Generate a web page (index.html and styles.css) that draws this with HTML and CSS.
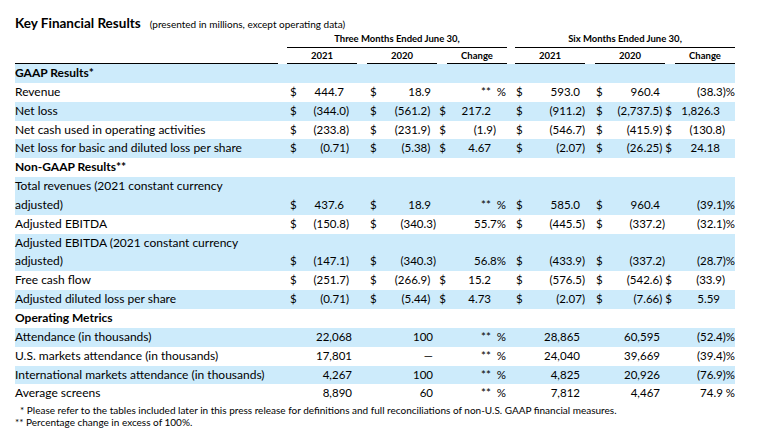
FILE: index.html
```html
<!DOCTYPE html>
<html>
<head>
<meta charset="utf-8">
<link rel="stylesheet" href="styles.css">
</head>
<body>
<div class="page">
  <div class="title"><span class="t-main">Key Financial Results</span><span class="t-sub">(presented in millions, except operating data)</span></div>
  <div class="hdr">
    <div class="grp g3">Three Months Ended June 30,</div>
    <div class="grp g6">Six Months Ended June 30,</div>
    <div class="yr y0"></div>
    <div class="yr y1">2021</div>
    <div class="yr y2">2020</div>
    <div class="yr y3">Change</div>
    <div class="yr y4">2021</div>
    <div class="yr y5">2020</div>
    <div class="yr y6">Change</div>
  </div>
  <div class="tbl">
    <div class="row band"><div class="lab sec">GAAP Results*</div></div>

    <div class="row">
      <div class="lab">Revenue</div>
      <div class="v c1"><span class="d">$</span><span class="n p">444.7</span></div>
      <div class="v c2"><span class="d">$</span><span class="n p">18.9</span></div>
      <div class="v c3 pct"><span class="n">**&nbsp;&nbsp;%</span></div>
      <div class="v c4"><span class="d">$</span><span class="n p">593.0</span></div>
      <div class="v c5"><span class="d">$</span><span class="n p">960.4</span></div>
      <div class="v c6 pct"><span class="n">(38.3)%</span></div>
    </div>

    <div class="row band">
      <div class="lab">Net loss</div>
      <div class="v c1"><span class="d">$</span><span class="n">(344.0)</span></div>
      <div class="v c2 tr"><span class="d">$</span><span class="n">(561.2)</span><span class="t">$</span></div>
      <div class="v c3 amt"><span class="n p">217.2</span></div>
      <div class="v c4"><span class="d">$</span><span class="n">(911.2)</span></div>
      <div class="v c5 tr"><span class="d">$</span><span class="n">(2,737.5)</span><span class="t">$</span></div>
      <div class="v c6 amt"><span class="n p">1,826.3</span></div>
    </div>

    <div class="row">
      <div class="lab">Net cash used in operating activities</div>
      <div class="v c1"><span class="d">$</span><span class="n">(233.8)</span></div>
      <div class="v c2 tr"><span class="d">$</span><span class="n">(231.9)</span><span class="t">$</span></div>
      <div class="v c3 amt"><span class="n">(1.9)</span></div>
      <div class="v c4"><span class="d">$</span><span class="n">(546.7)</span></div>
      <div class="v c5 tr"><span class="d">$</span><span class="n">(415.9)</span><span class="t">$</span></div>
      <div class="v c6 amt"><span class="n">(130.8)</span></div>
    </div>

    <div class="row band">
      <div class="lab">Net loss for basic and diluted loss per share</div>
      <div class="v c1"><span class="d">$</span><span class="n">(0.71)</span></div>
      <div class="v c2 tr"><span class="d">$</span><span class="n">(5.38)</span><span class="t">$</span></div>
      <div class="v c3 amt"><span class="n p">4.67</span></div>
      <div class="v c4"><span class="d">$</span><span class="n">(2.07)</span></div>
      <div class="v c5 tr"><span class="d">$</span><span class="n">(26.25)</span><span class="t">$</span></div>
      <div class="v c6 amt"><span class="n p">24.18</span></div>
    </div>

    <div class="row"><div class="lab sec">Non-GAAP Results**</div></div>

    <div class="row band">
      <div class="lab">Total revenues (2021 constant currency<br>adjusted)</div>
      <div class="v c1"><span class="d">$</span><span class="n p">437.6</span></div>
      <div class="v c2"><span class="d">$</span><span class="n p">18.9</span></div>
      <div class="v c3 pct"><span class="n">**&nbsp;&nbsp;%</span></div>
      <div class="v c4"><span class="d">$</span><span class="n p">585.0</span></div>
      <div class="v c5"><span class="d">$</span><span class="n p">960.4</span></div>
      <div class="v c6 pct"><span class="n">(39.1)%</span></div>
    </div>

    <div class="row">
      <div class="lab">Adjusted EBITDA</div>
      <div class="v c1"><span class="d">$</span><span class="n">(150.8)</span></div>
      <div class="v c2"><span class="d">$</span><span class="n">(340.3)</span></div>
      <div class="v c3 pct"><span class="n">55.7%</span></div>
      <div class="v c4"><span class="d">$</span><span class="n">(445.5)</span></div>
      <div class="v c5"><span class="d">$</span><span class="n">(337.2)</span></div>
      <div class="v c6 pct"><span class="n">(32.1)%</span></div>
    </div>

    <div class="row band">
      <div class="lab">Adjusted EBITDA (2021 constant currency<br>adjusted)</div>
      <div class="v c1"><span class="d">$</span><span class="n">(147.1)</span></div>
      <div class="v c2"><span class="d">$</span><span class="n">(340.3)</span></div>
      <div class="v c3 pct"><span class="n">56.8%</span></div>
      <div class="v c4"><span class="d">$</span><span class="n">(433.9)</span></div>
      <div class="v c5"><span class="d">$</span><span class="n">(337.2)</span></div>
      <div class="v c6 pct"><span class="n">(28.7)%</span></div>
    </div>

    <div class="row">
      <div class="lab">Free cash flow</div>
      <div class="v c1"><span class="d">$</span><span class="n">(251.7)</span></div>
      <div class="v c2 tr"><span class="d">$</span><span class="n">(266.9)</span><span class="t">$</span></div>
      <div class="v c3 amt"><span class="n p">15.2</span></div>
      <div class="v c4"><span class="d">$</span><span class="n">(576.5)</span></div>
      <div class="v c5 tr"><span class="d">$</span><span class="n">(542.6)</span><span class="t">$</span></div>
      <div class="v c6 amt"><span class="n">(33.9)</span></div>
    </div>

    <div class="row band">
      <div class="lab">Adjusted diluted loss per share</div>
      <div class="v c1"><span class="d">$</span><span class="n">(0.71)</span></div>
      <div class="v c2 tr"><span class="d">$</span><span class="n">(5.44)</span><span class="t">$</span></div>
      <div class="v c3 amt"><span class="n p">4.73</span></div>
      <div class="v c4"><span class="d">$</span><span class="n">(2.07)</span></div>
      <div class="v c5 tr"><span class="d">$</span><span class="n">(7.66)</span><span class="t">$</span></div>
      <div class="v c6 amt"><span class="n p">5.59</span></div>
    </div>

    <div class="row"><div class="lab sec">Operating Metrics</div></div>

    <div class="row band op">
      <div class="lab">Attendance (in thousands)</div>
      <div class="v c1"><span class="n">22,068</span></div>
      <div class="v c2"><span class="n">100</span></div>
      <div class="v c3 pct"><span class="n">**&nbsp;&nbsp;%</span></div>
      <div class="v c4"><span class="n">28,865</span></div>
      <div class="v c5"><span class="n">60,595</span></div>
      <div class="v c6 pct"><span class="n">(52.4)%</span></div>
    </div>

    <div class="row op">
      <div class="lab">U.S. markets attendance (in thousands)</div>
      <div class="v c1"><span class="n">17,801</span></div>
      <div class="v c2"><span class="n">—</span></div>
      <div class="v c3 pct"><span class="n">**&nbsp;&nbsp;%</span></div>
      <div class="v c4"><span class="n">24,040</span></div>
      <div class="v c5"><span class="n">39,669</span></div>
      <div class="v c6 pct"><span class="n">(39.4)%</span></div>
    </div>

    <div class="row band op">
      <div class="lab">International markets attendance (in thousands)</div>
      <div class="v c1"><span class="n">4,267</span></div>
      <div class="v c2"><span class="n">100</span></div>
      <div class="v c3 pct"><span class="n">**&nbsp;&nbsp;%</span></div>
      <div class="v c4"><span class="n">4,825</span></div>
      <div class="v c5"><span class="n">20,926</span></div>
      <div class="v c6 pct"><span class="n">(76.9)%</span></div>
    </div>

    <div class="row op">
      <div class="lab">Average screens</div>
      <div class="v c1"><span class="n">8,890</span></div>
      <div class="v c2"><span class="n">60</span></div>
      <div class="v c3 pct"><span class="n">**&nbsp;&nbsp;%</span></div>
      <div class="v c4"><span class="n">7,812</span></div>
      <div class="v c5"><span class="n">4,467</span></div>
      <div class="v c6 pct"><span class="n">74.9 %</span></div>
    </div>
  </div>
  <div class="notes">
    <p class="n1">* Please refer to the tables included later in this press release for definitions and full reconciliations of non-U.S. GAAP financial measures.</p>
    <p class="n2">** Percentage change in excess of 100%.</p>
  </div>
</div>
</body>
</html>
```

FILE: styles.css
```css
* { box-sizing: border-box; margin: 0; padding: 0; }
body { margin: 0; background: #fff; color: #000; font-family: Lato, "Open Sans", sans-serif; }
.page { padding: 12px 0 0 15px; width: 766px; }

.title { height: 19px; line-height: 19px; white-space: nowrap; }
.t-main { font-size: 13.5px; font-weight: 700; }
.t-sub { font-size: 10px; margin-left: 9px; }

.hdr {
  display: grid;
  grid-template-columns: 263px 9px 70px 10px 70px 10px 60px 8px 70px 10px 70px 10px 60px;
  grid-template-rows: 17px 16px;
  font-weight: 700;
  font-size: 9.5px;
}
.grp { border-bottom: 1px solid #000; text-align: center; line-height: 16px; grid-row: 1; }
.g3 { grid-column: 3 / 8; }
.g6 { grid-column: 9 / 14; }
.yr { grid-row: 2; border-bottom: 1px solid #000; text-align: center; line-height: 15px; }
.y0 { grid-column: 1; }
.y1 { grid-column: 3; }
.y2 { grid-column: 5; }
.y3 { grid-column: 7; }
.y4 { grid-column: 9; }
.y5 { grid-column: 11; }
.y6 { grid-column: 13; }

.tbl { width: 720px; font-size: 11.5px; }
.row {
  display: grid;
  grid-template-columns: 272px 80px 80px 68px 80px 80px 60px;
  line-height: 18.85px;
  min-height: 18.85px;
}
.band { background: #cdebfb; }
.lab { white-space: nowrap; font-size: 12px; }
.sec { font-weight: 700; }

.v { display: flex; align-self: end; white-space: nowrap; }
.d { margin-right: auto; }
.n.p { padding-right: 5px; }
.t { margin-left: 9px; }

.c1 { padding: 0 18px 0 3px; }
.c2 { padding: 0 11px 0 3px; }
.c2.tr { padding-right: 1px; }
.c3 { justify-content: flex-end; padding-right: 9px; }
.c3.amt { padding-right: 19px; }
.c4 { padding: 0 10px 0 1px; }
.c5 { padding: 0 10px 0 1px; }
.c5.tr { padding-right: 3px; }
.c5.tr .t { margin-left: 3px; }
.c6 { justify-content: flex-end; padding-right: 0; }
.c6.amt { padding-right: 10px; }

.op .c1 { justify-content: flex-end; padding-right: 15px; }
.op .c2 { justify-content: flex-end; padding-right: 14px; }
.op .c4 { justify-content: flex-end; padding-right: 15px; }
.op .c5 { justify-content: flex-end; padding-right: 15px; }

.notes { font-size: 10px; line-height: 12px; padding-top: 1px; }
.n1 { padding-left: 5px; }
```
